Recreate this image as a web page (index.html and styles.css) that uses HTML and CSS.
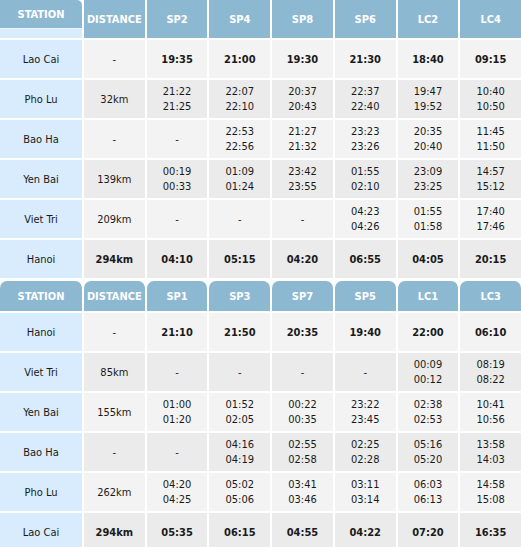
FILE: index.html
```html
<!DOCTYPE html>
<html>
<head>
<meta charset="utf-8">
<link rel="stylesheet" href="styles.css">
</head>
<body>
<div class="timetable first">
  <div class="hd station"><span>STATION</span></div>
  <div class="hd">DISTANCE</div>
  <div class="hd">SP2</div>
  <div class="hd">SP4</div>
  <div class="hd">SP8</div>
  <div class="hd">SP6</div>
  <div class="hd">LC2</div>
  <div class="hd">LC4</div>

  <div class="st">Lao Cai</div>
  <div class="c odd">-</div>
  <div class="c odd b">19:35</div>
  <div class="c odd b">21:00</div>
  <div class="c odd b">19:30</div>
  <div class="c odd b">21:30</div>
  <div class="c odd b">18:40</div>
  <div class="c odd b">09:15</div>

  <div class="st">Pho Lu</div>
  <div class="c even">32km</div>
  <div class="c even">21:22<br>21:25</div>
  <div class="c even">22:07<br>22:10</div>
  <div class="c even">20:37<br>20:43</div>
  <div class="c even">22:37<br>22:40</div>
  <div class="c even">19:47<br>19:52</div>
  <div class="c even">10:40<br>10:50</div>

  <div class="st">Bao Ha</div>
  <div class="c odd">-</div>
  <div class="c odd">-</div>
  <div class="c odd">22:53<br>22:56</div>
  <div class="c odd">21:27<br>21:32</div>
  <div class="c odd">23:23<br>23:26</div>
  <div class="c odd">20:35<br>20:40</div>
  <div class="c odd">11:45<br>11:50</div>

  <div class="st">Yen Bai</div>
  <div class="c even">139km</div>
  <div class="c even">00:19<br>00:33</div>
  <div class="c even">01:09<br>01:24</div>
  <div class="c even">23:42<br>23:55</div>
  <div class="c even">01:55<br>02:10</div>
  <div class="c even">23:09<br>23:25</div>
  <div class="c even">14:57<br>15:12</div>

  <div class="st">Viet Tri</div>
  <div class="c odd">209km</div>
  <div class="c odd">-</div>
  <div class="c odd">-</div>
  <div class="c odd">-</div>
  <div class="c odd">04:23<br>04:26</div>
  <div class="c odd">01:55<br>01:58</div>
  <div class="c odd">17:40<br>17:46</div>

  <div class="st">Hanoi</div>
  <div class="c even b">294km</div>
  <div class="c even b">04:10</div>
  <div class="c even b">05:15</div>
  <div class="c even b">04:20</div>
  <div class="c even b">06:55</div>
  <div class="c even b">04:05</div>
  <div class="c even b">20:15</div>
</div>

<div class="timetable second">
  <div class="hd tab">STATION</div>
  <div class="hd tab">DISTANCE</div>
  <div class="hd tab">SP1</div>
  <div class="hd tab">SP3</div>
  <div class="hd tab">SP7</div>
  <div class="hd tab">SP5</div>
  <div class="hd tab">LC1</div>
  <div class="hd tab">LC3</div>

  <div class="st">Hanoi</div>
  <div class="c odd">-</div>
  <div class="c odd b">21:10</div>
  <div class="c odd b">21:50</div>
  <div class="c odd b">20:35</div>
  <div class="c odd b">19:40</div>
  <div class="c odd b">22:00</div>
  <div class="c odd b">06:10</div>

  <div class="st">Viet Tri</div>
  <div class="c even">85km</div>
  <div class="c even">-</div>
  <div class="c even">-</div>
  <div class="c even">-</div>
  <div class="c even">-</div>
  <div class="c even">00:09<br>00:12</div>
  <div class="c even">08:19<br>08:22</div>

  <div class="st">Yen Bai</div>
  <div class="c odd">155km</div>
  <div class="c odd">01:00<br>01:20</div>
  <div class="c odd">01:52<br>02:05</div>
  <div class="c odd">00:22<br>00:35</div>
  <div class="c odd">23:22<br>23:45</div>
  <div class="c odd">02:38<br>02:53</div>
  <div class="c odd">10:41<br>10:56</div>

  <div class="st">Bao Ha</div>
  <div class="c even">-</div>
  <div class="c even">-</div>
  <div class="c even">04:16<br>04:19</div>
  <div class="c even">02:55<br>02:58</div>
  <div class="c even">02:25<br>02:28</div>
  <div class="c even">05:16<br>05:20</div>
  <div class="c even">13:58<br>14:03</div>

  <div class="st">Pho Lu</div>
  <div class="c odd">262km</div>
  <div class="c odd">04:20<br>04:25</div>
  <div class="c odd">05:02<br>05:06</div>
  <div class="c odd">03:41<br>03:46</div>
  <div class="c odd">03:11<br>03:14</div>
  <div class="c odd">06:03<br>06:13</div>
  <div class="c odd">14:58<br>15:08</div>

  <div class="st">Lao Cai</div>
  <div class="c even b">294km</div>
  <div class="c even b">05:35</div>
  <div class="c even b">06:15</div>
  <div class="c even b">04:55</div>
  <div class="c even b">04:22</div>
  <div class="c even b">07:20</div>
  <div class="c even b">16:35</div>
</div>
</body>
</html>
```

FILE: styles.css
```css
html, body {
  margin: 0;
  padding: 0;
  background: #ffffff;
}
body {
  font-family: "DejaVu Sans Condensed", "DejaVu Sans", Verdana, sans-serif;
  font-stretch: condensed;
  font-size: 11px;
  color: #1a1a1a;
  overflow: hidden;
}
.timetable {
  display: grid;
  grid-template-columns: 82px repeat(7, 1fr);
  column-gap: 2px;
  row-gap: 2px;
  width: 521px;
}
.first {
  grid-template-rows: 38px repeat(6, 38px);
}
.second {
  margin-top: 3px;
  grid-template-rows: 30px repeat(6, 38px);
}
.hd {
  background: #8db8d2;
  color: #ffffff;
  font-weight: bold;
  display: flex;
  align-items: center;
  justify-content: center;
}
.first .station {
  background: linear-gradient(#8db8d2 0 28px, #eaf5ff 28px 29px, #d8ecfd 29px);
  border-top-right-radius: 5px;
  align-items: flex-start;
}
.first .station span {
  line-height: 30px;
}
.tab {
  border-top-left-radius: 7px;
  border-top-right-radius: 7px;
}
.st {
  background: #d8ecfd;
  display: flex;
  align-items: center;
  justify-content: center;
}
.c {
  display: flex;
  align-items: center;
  justify-content: center;
  text-align: center;
  line-height: 15px;
}
.odd {
  background: #f3f3f3;
}
.even {
  background: #ebebeb;
}
.b {
  font-weight: bold;
}
```
